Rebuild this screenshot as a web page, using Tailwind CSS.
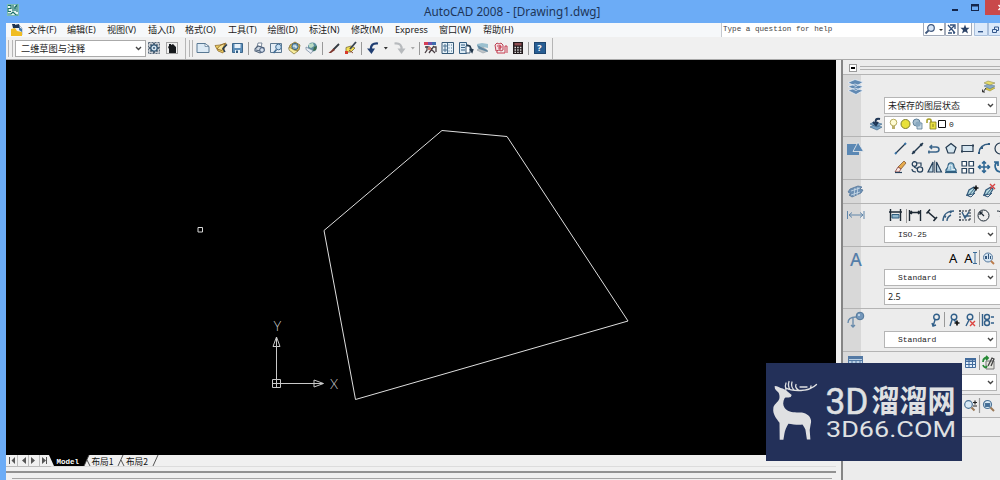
<!DOCTYPE html>
<html lang="zh-CN">
<head>
    <meta charset="UTF-8">
    <meta name="viewport" content="width=device-width, initial-scale=1.0">
    <title>AutoCAD 2008 - [Drawing1.dwg]</title>
    <script src="https://cdn.jsdelivr.net/npm/@tailwindcss/browser@4"></script>
</head>
<body class="bg-[#6cacf6] font-['Noto_Sans','Noto_Sans_CJK_SC',sans-serif] text-[#1c1c1c]">
    <div class="w-[1000px] h-[480px] overflow-hidden flex flex-col relative">
        <!-- Title bar -->
        <header class="h-[23px] shrink-0 flex items-start">
            <svg class="w-3 h-3 ml-[7px] mt-[4px]" viewBox="0 0 12 12">
                <path fill="#e4f4f0" d="M0 0h12v12H0z"/>
                <path fill="none" stroke="#176e68" stroke-width="1.2" d="M1 1.5h3v3H1v3h3M6 1v6M8 7V3l2-2v7M1 10h3l2-2 3 3h2M7 4h2"/>
                <path fill="none" stroke="#4fa59c" stroke-width=".8" d="M.4.4h11.2v11.2H.4z"/>
            </svg>
            <h1 class="ml-[405px] mt-[2px] text-[11.7px] leading-[18px] whitespace-nowrap text-[#1d3558]">AutoCAD 2008 - [Drawing1.dwg]</h1>
            <svg class="w-[49px] h-[15px] ml-auto" viewBox="0 0 49 15">
                <path fill="#14264c" d="M1 9h6v2H1zM20 4h8v7h-8zm1 2.500v3.500h6V6.500z" fill-rule="evenodd"/>
                <path fill="#c9494b" d="M34 0h15v15H34z"/>
                <path stroke="#fff" stroke-width="1.500" d="M47.500 5l5 5M47.500 10l5-5"/>
            </svg>
        </header>

        <div class="flex-1 min-h-0 ml-[6px] bg-[#f0f0f0] flex flex-col">
            <!-- Menu bar -->
            <nav class="h-[14px] shrink-0 flex items-center bg-[#f6f8fa] text-[9.1px] leading-[14px] whitespace-nowrap">
                <svg class="w-[12px] h-[12px] ml-[5px] mr-[5px]" viewBox="0 0 12 12">
                    <path fill="#eef2f8" stroke="#8792a5" stroke-width=".6" d="M3 1h5l3 3v7H3z"/>
                    <path fill="#1e3452" d="M1 0h3v4H2zM4 1l4-1 1 4H4z"/>
                    <path fill="#f0bd22" d="M0 5l4-1 2 3 5 1v4H0z"/>
                    <path fill="#4078aa" d="M8 3l3 2v3L8 6z"/>
                </svg>
                <span class="w-[39px]">文件(F)</span>
                <span class="w-[40px]">编辑(E)</span>
                <span class="w-[41px]">视图(V)</span>
                <span class="w-[37px]">插入(I)</span>
                <span class="w-[43px]">格式(O)</span>
                <span class="w-[39.500px]">工具(T)</span>
                <span class="w-[41.500px]">绘图(D)</span>
                <span class="w-[42px]">标注(N)</span>
                <span class="w-[44px]">修改(M)</span>
                <span class="w-[44px]">Express</span>
                <span class="w-[44px]">窗口(W)</span>
                <span class="w-[38px]">帮助(H)</span>
                <div class="ml-auto flex h-[14px] shrink-0 w-[279px] overflow-hidden">
                    <div class="w-[202px] shrink-0 bg-white border-l border-[#c4c8ce] pl-[1px] font-['Liberation_Mono',monospace] text-[7.600px] leading-[13px] text-[#444]">Type a question for help</div>
                    <svg class="w-[78px] h-[14px] shrink-0" viewBox="0 0 78 14">
                        <path fill="#fff" stroke="#a3abb9" d="M.5-1v13.500h21V-1M22.500-1v13.500h12V-1M35.500-1v13.500h13V-1"/>
                        <circle cx="8" cy="5" r="3.300" fill="#d8e6f7" stroke="#40587d" stroke-width="1.200"/>
                        <path stroke="#40587d" stroke-width="1.800" d="M5.500 7.500L2.500 10.500"/>
                        <path fill="#333" d="M16 6h4l-2 2z"/>
                        <path fill="none" stroke="#34507a" stroke-width="1.300" d="M25 2l7 8M26 8l5-5M27 2h5v4M25 10h4M30 10h2"/>
                        <path fill="#2b4266" d="M42 1.500l1.200 3.300h3.400L44 7l1 3.500-3-2-3 2L40 7l-2.600-2.200h3.400z"/>
                        <path fill="#dbe9fa" stroke="#a9bfdb" d="M51.500-1v13.500h13V-1M65.500-1v13.500h14V-1"/>
                        <path fill="#35588c" d="M55 8h5v1.400h-5z"/>
                        <path fill="none" stroke="#35588c" d="M69.500 6.500h4v3h-4zM71.500 6V4h4v3.500H74"/>
                    </svg>
                </div>
            </nav>

            <!-- Toolbars -->
            <div class="h-[23px] shrink-0 flex items-center border-b border-[#a9a9a9]">
                <div class="w-[5px] h-[17px] ml-[2px] border-x border-[#b5b5b5]"></div>
                <div class="w-[131px] h-[17px] ml-[2px] mr-px shrink-0 bg-white border border-[#aaaaaa] flex items-center justify-between pl-[5px] pr-[3px] text-[9.200px] leading-[15px]">
                    <span>二维草图与注释</span>
                    <svg class="w-[7px] h-[5px]" viewBox="0 0 7 5"><path fill="none" stroke="#444" stroke-width="1.400" d="M1 1l2.500 2.500L6 1"/></svg>
                </div>
                <svg class="w-[35px] h-[14px] shrink-0" viewBox="0 0 35 14">
                    <path fill="#c9ced4" stroke="#5b6b7d" stroke-dasharray="2 1" d="M1.500 1.500h11v11h-11z"/>
                    <path stroke="#2a4055" stroke-width="1.500" d="M7 2v10M2 7h10M3.500 3.500l7 7M10.500 3.500l-7 7"/>
                    <circle cx="7" cy="7" r="3.200" fill="#d5e3ee" stroke="#2f5574" stroke-width="1.300"/>
                    <circle cx="7" cy="7" r="1" fill="#2f5574"/>
                    <path fill="none" stroke="#555" stroke-dasharray="1 1" d="M19.500 1.500h11v11h-11z"/>
                    <path fill="#16191c" d="M21 6l1-1V3h2v1l2-1 3 3v6h-7V8z"/>
                </svg>
                <div class="w-[4px] h-[21px] mr-[3px] border-r border-[#b5b5b5]"></div>
                <div class="w-[4px] h-[17px] mr-[1px] border-x border-[#b5b5b5]"></div>
                <div class="flex items-center shrink-0 h-[21px] pr-[3px] border-r border-[#b5b5b5]">
                    <!-- new / open / save -->
                    <svg class="w-[17.500px] h-[14px]" viewBox="0 0 17.500 14"><path fill="#dceaf5" stroke="#597994" d="M3 2.500h8l4 3v6H3z"/><path fill="#fff" stroke="#597994" stroke-width=".7" d="M11 2.500v3h4z"/></svg>
                    <svg class="w-[17.500px] h-[14px]" viewBox="0 0 17.500 14"><path fill="#e9cb60" stroke="#937032" stroke-width=".8" d="M3 4.500l5-.5 6-2-3 10-5-2z"/><path fill="#f6e49a" stroke="#8a6325" stroke-width=".8" d="M5 8l3-3.500 5-2-3 7z"/><path fill="none" stroke="#263c53" stroke-width="1.500" d="M15 3.500l-4 4 2 3.500"/></svg>
                    <svg class="w-[17.500px] h-[14px]" viewBox="0 0 17.500 14"><path fill="#5b8db8" stroke="#3c678c" d="M3.500 2.500h10v9h-10z"/><path fill="#e7f1f9" d="M5.500 3h6v4h-6zM6 9h5v3H6z"/><path fill="#315b80" d="M7 9.500h2V12H7z"/></svg>
                    <span class="w-px h-[13px] ml-px mr-[2px] bg-[#999]"></span>
                    <!-- plot / preview / publish / 3D DWF -->
                    <svg class="w-[17.500px] h-[14px]" viewBox="0 0 17.500 14"><path fill="#fff" stroke="#5e7085" stroke-width=".8" d="M6 6l1-4h4l-1 4z"/><path fill="#cdd6e0" stroke="#506278" stroke-width="1.100" d="M4 8l3-3 6 2v3l-4 2-5-2z"/><circle cx="11" cy="9" r="2.300" fill="#d8e2ee" stroke="#43597a"/><path stroke="#506278" d="M5 9l4 1"/></svg>
                    <svg class="w-[17.500px] h-[14px]" viewBox="0 0 17.500 14"><path fill="#e4edf5" stroke="#5c7891" d="M2.500 2.500h11v9h-11z"/><circle cx="10.500" cy="6" r="2.800" fill="#c4def2" stroke="#426d94"/><path stroke="#426d94" stroke-width="1.600" d="M8.500 8.500l-3 3.500"/></svg>
                    <svg class="w-[17.500px] h-[14px]" viewBox="0 0 17.500 14"><path fill="#e4c34c" stroke="#7b6731" stroke-width=".8" d="M4 4l5-3 5 3-1 5-6 3-4-4z"/><circle cx="9" cy="5.500" r="3.200" fill="#7da6c0" stroke="#3c6684"/><path fill="#f8ed9c" stroke="#82743b" stroke-width=".7" d="M3 6l5 3 4 1-4 3-5-4z"/><path fill="none" stroke="#fff" d="M7 5h3v2"/></svg>
                    <svg class="w-[17.500px] h-[14px]" viewBox="0 0 17.500 14"><circle cx="9.500" cy="6" r="4.500" fill="#5b8e9d"/><path fill="#bcdcc4" d="M6 3l4-1 1 3-3 2-2-1z"/><path fill="#3c6c4c" d="M11 6l3-1-1 4-3 1z"/><path fill="#e8eef5" stroke="#70839a" stroke-width=".7" d="M3 6l5 2.500 2 1-2 3-5-4z"/></svg>
                    <span class="w-px h-[13px] ml-px mr-[2px] bg-[#999]"></span>
                    <!-- match properties / block editor -->
                    <svg class="w-[17.500px] h-[14px]" viewBox="0 0 17.500 14"><path stroke="#343a42" stroke-width="1.800" d="M14 3L8 9"/><path fill="#7d342b" d="M8.500 7.500l1.500 1.500L6 12H3.500z"/></svg>
                    <svg class="w-[17.500px] h-[14px]" viewBox="0 0 17.500 14"><path fill="#f4df52" stroke="#776c35" stroke-width=".8" d="M4 6.500l5-1.500 4 2-4 4H4z"/><path stroke="#394452" stroke-width="1.800" d="M14 1L8 8"/><path fill="#d83a2c" d="M3 10h3v3H3z"/><path stroke="#8c4735" d="M7 9l4 3"/></svg>
                    <span class="w-px h-[13px] ml-px mr-[2px] bg-[#999]"></span>
                    <!-- undo / redo -->
                    <svg class="w-[17.500px] h-[14px]" viewBox="0 0 17.500 14"><path fill="none" stroke="#203e72" stroke-width="2.200" d="M14 2.500C9 2 6.500 4 7 9"/><path fill="#203e72" d="M3 7.500h8L7.500 13z"/></svg>
                    <svg class="w-[9.500px] h-[14px]" viewBox="0 0 9.500 14"><path fill="#333" d="M2.800 6h4L4.800 8.500z"/></svg>
                    <svg class="w-[17.500px] h-[14px]" viewBox="0 0 17.500 14"><path fill="none" stroke="#b7babd" stroke-width="2.200" d="M3.500 2.500C9 2 11 4 10.500 9"/><path fill="#b7babd" d="M6.500 7.500h8L10.500 13z"/></svg>
                    <svg class="w-[9.500px] h-[14px]" viewBox="0 0 9.500 14"><path fill="#aaa" d="M2.800 6h4L4.800 8.500z"/></svg>
                    <span class="w-px h-[13px] ml-px mr-[2px] bg-[#999]"></span>
                    <!-- palettes -->
                    <svg class="w-[17.500px] h-[14px]" viewBox="0 0 17.500 14"><path fill="#d63d55" d="M2 1h4v3H2z"/><path fill="#6e51aa" d="M6 1h4v3H6z"/><path fill="#3d6cac" d="M10 1h4v3h-4z"/><path fill="none" stroke="#4b4045" stroke-width="1.300" d="M3 6h4l6 6M5 5v4l-2 3M12 5l-5 7M12 6h2v5"/><path fill="#cf7b6c" d="M6 6h3v3H6z"/></svg>
                    <svg class="w-[17.500px] h-[14px]" viewBox="0 0 17.500 14"><path fill="#e6f1f8" stroke="#365976" d="M3 1.500h11.500v11H3z"/><path fill="none" stroke="#4c7291" d="M5 4h2v2H5zM9.500 4h1M12 4h1M5 8h2v2H5zM9.500 7h1M12 7h1M9.500 10h1M12 10h1M8.500 2v10"/></svg>
                    <svg class="w-[17.500px] h-[14px]" viewBox="0 0 17.500 14"><path fill="#dceaf4" stroke="#365f82" d="M2.500 1.500h7v11h-7z"/><path stroke="#365f82" d="M4 4h4M4 6.500h4M4 9h4"/><path fill="#fff" stroke="#3a5975" d="M9 5h4v7H9z"/><path fill="none" stroke="#24384b" stroke-width="1.500" d="M10 4l3 1 2 5M13 8l2 3 1-3"/></svg>
                    <svg class="w-[17.500px] h-[14px]" viewBox="0 0 17.500 14"><path fill="#9bc0cf" d="M3 3l5-1 6 1v4L9 6 4 8z"/><path fill="#c1c5c8" stroke="#9aa5ac" stroke-width=".7" d="M3 9l6-3 5 4-5 2z"/><path fill="#5f86a0" d="M3 4l10 5 1 2-9-3z"/></svg>
                    <svg class="w-[17.500px] h-[14px]" viewBox="0 0 17.500 14"><path fill="#f3dfe2" stroke="#bd3f51" d="M3 4l2-2 2 1 2-1 2 2v5l-2 1-2-1-3 1z"/><path fill="none" stroke="#c83b4e" d="M5 5h4v2H6M5 10v2h8V5h2v7M8 4v5"/></svg>
                    <svg class="w-[17.500px] h-[14px]" viewBox="0 0 17.500 14"><path fill="#241b1d" d="M4 1h10v12H4z"/><path fill="#8e4c50" d="M5.500 2h7v2.500h-7z"/><path stroke="#ddd" stroke-width="1.300" stroke-dasharray="1.500 1.200" d="M5.500 6.500h8M5.500 9h8M5.500 11.300h8"/></svg>
                    <span class="w-px h-[13px] ml-px mr-[2px] bg-[#999]"></span>
                    <span class="w-[12px] h-[12px] mx-[3px] bg-[#285e93] border border-[#1e4670] text-white text-[9px] leading-[10px] font-bold text-center">?</span>
                </div>
            </div>

            <div class="flex-1 min-h-0 flex">
                <div class="w-[830px] shrink-0 flex flex-col">
                    <!-- Drawing area -->
                    <svg class="w-[830px] h-[395px] bg-black shrink-0" viewBox="6 60 830 395">
                        <path fill="none" stroke="#dedede" stroke-width="1" d="M324 230.500L442 130.500L507 136.500L628 321L355.500 399.500Z"/>
                        <path fill="none" stroke="#d8d8d8" d="M198 227.500h4.500v4.500h-4.500z"/>
                        <path fill="none" stroke="#c9c9c9" d="M272.500 379.500h8v8h-8zM276.500 387v-40M272.500 383.500H314M276.500 337l3.500 9.500h-7zM276.500 337v10M323.500 383.500l-9.500-3.500v7zM314 383.500h9"/>
                        <text x="273.500" y="330.500" fill="#cfcfcf" font-size="13" font-family="Lato" font-weight="300">Y</text>
                        <text x="330" y="388.500" fill="#cfcfcf" font-size="13" font-family="Lato" font-weight="300">X</text>
                    </svg>
                    <!-- Layout tabs -->
                    <div class="h-[12px] shrink-0 flex border-b border-[#dcdcdc]">
                        <svg class="w-[155px] h-[12px]" viewBox="0 0 155 12">
                            <path stroke="#bcbcbc" d="M11.500 0v12M22.500 0v12M33.500 0v12M0 11.500h45"/>
                            <path fill="#555" d="M9 2v7L5.500 5.500zM3 2h1v7H3zM20 2v7l-4-3.500zM25 2v7l4-3.500zM36 2v7l4-3.500zM40 2h1v7h-1z"/>
                            <path fill="#000" d="M43 0h40l-5 11H48z"/>
                            <path fill="none" stroke="#444" stroke-width=".9" d="M83 0l-5 11M84 11l-3-6M117 0l-5 11M118 11l-3-6M152 0l-5 11"/>
                            <text x="50.500" y="9" fill="#fff" font-size="7.500" font-weight="700" font-family="Liberation Mono">Model</text>
                            <text x="85.500" y="9.500" fill="#111" font-size="9" font-family="Noto Sans CJK SC" textLength="22" lengthAdjust="spacingAndGlyphs">布局1</text>
                            <text x="120" y="9.500" fill="#111" font-size="9" font-family="Noto Sans CJK SC" textLength="22" lengthAdjust="spacingAndGlyphs">布局2</text>
                        </svg>
                    </div>
                    <div class="mt-[4px] h-[8px] border-t-2 border-[#929292]"></div>
                    <div class="-mt-px ml-[6px] mr-[4px] h-px bg-[#a5a5a5]"></div>
                </div>

                <!-- Dashboard -->
                <aside class="w-[164px] shrink-0 pl-[5px]">
                    <div class="h-[420px] border-l-2 border-[#858585] bg-[#ececec] flex flex-col">
                        <div class="h-[14px] shrink-0 flex items-center">
                            <span class="w-[8px] h-[8px] ml-[6px] mr-[3px] mt-[2px] bg-white border border-[#999] flex items-center justify-center"><i class="block w-[4px] h-[2px] bg-black"></i></span>
                            <span class="flex-1 h-[4px] mt-[2px] border-y border-[#b1b1b1]"></span>
                        </div>

                        <!-- layers -->
                        <section class="h-[62px] shrink-0 flex border-t border-[#b4b4b4]">
                            <div class="w-[18px] shrink-0 bg-[#d8d8d8]">
                                <svg class="w-[18px] h-[18px] ml-[4px] mt-[3px] max-w-none" viewBox="0 0 18 18"><path fill="#6189b2" stroke="#eef4fa" stroke-width=".7" d="M1 12.500l7-2.500 8 2.500-7 4zM1 8.500l7-2.500 8 2.500-7 4zM1 4.500L8 1.500l8 2.500-7 4.500z"/></svg>
                            </div>
                            <div class="flex-1 pl-[23px] overflow-hidden">
                                <div class="h-[22px] flex justify-end pr-[4px] pt-[4px]">
                                    <svg class="w-[15px] h-[15px]" viewBox="0 0 15 15"><path fill="#d9c63e" stroke="#8a8436" stroke-width=".5" d="M4 10l4-3 6 2-5 3z"/><path fill="#88a9c4" stroke="#4f718f" stroke-width=".5" d="M3 7l4-2 7 2-5 3z"/><path fill="#e7dd6b" stroke="#7e7c40" stroke-width=".5" d="M3 4l4-2 7 2-5 2z"/><path fill="none" stroke="#333" d="M5 9l-3 4M1.500 10.500v2.500H4"/></svg>
                                </div>
                                <div class="w-[113px] h-[17px] bg-white border border-[#b5b5b5] flex items-center justify-between pl-[3px] pr-[2px] text-[9px] leading-[15px]">
                                    <span>未保存的图层状态</span>
                                    <svg class="w-[7px] h-[5px]" viewBox="0 0 7 5"><path fill="none" stroke="#444" stroke-width="1.400" d="M1 1l2.500 2.500L6 1"/></svg>
                                </div>
                                <div class="-ml-[16px] mt-[2px] flex">
                                    <svg class="w-[16px] h-[16px] shrink-0" viewBox="0 0 16 16"><path fill="#7aa3c4" stroke="#3b6488" stroke-width=".6" d="M2 11l4-2 8 2-5 3zM2 8l4-2 8 2-5 3z"/><path fill="none" stroke="#1e3554" stroke-width="2" d="M12 3C8 2 7 4 8 7M5 6l3 3 2-3"/></svg>
                                    <div class="w-[140px] h-[17px] shrink-0 bg-white border border-[#b5b5b5] flex items-center">
                                        <svg class="w-[62px] h-[15px] shrink-0" viewBox="0 0 62 15">
                                            <circle cx="8.500" cy="5.500" r="3.300" fill="#fffcd2" stroke="#a4983f" stroke-width=".8"/><path fill="#bbb06a" d="M7 9h3v3H7z"/>
                                            <circle cx="20.500" cy="7" r="4.500" fill="#e8e13b" stroke="#7f7f32"/>
                                            <circle cx="31.500" cy="5.500" r="3.500" fill="#a5bed0" stroke="#5d7f98"/><path fill="#c7d9e5" stroke="#5d7f98" stroke-width=".8" d="M32 6h5v6h-5z"/><circle cx="33" cy="7" r="2.600" fill="#88a8bf"/>
                                            <path fill="none" stroke="#a49c22" stroke-width="1.500" d="M42 6V3.500c0-2 4-2 4 0V8"/><path fill="#e7df43" stroke="#847e22" stroke-width=".8" d="M45 5h6v7h-6z"/><path stroke="#847e22" d="M48 7v3"/>
                                            <path fill="#fff" stroke="#111" d="M53.500 3.500h7v7h-7z"/>
                                        </svg>
                                        <span class="ml-[2px] font-['Liberation_Mono',monospace] text-[8px]">0</span>
                                    </div>
                                </div>
                            </div>
                        </section>

                        <!-- 2D draw -->
                        <section class="h-[43px] shrink-0 flex border-t border-[#b4b4b4]">
                            <div class="w-[18px] shrink-0 bg-[#d8d8d8]">
                                <svg class="w-[18px] h-[16px] ml-[3px] mt-[4px] max-w-none" viewBox="0 0 18 16"><path fill="#5b88b4" d="M1 3h12v11H1z"/><path fill="#5b88b4" stroke="#eee" stroke-width=".8" d="M12 1l5.500 9.500H7z"/></svg>
                            </div>
                            <div class="flex-1 pl-[31px] pt-[2px] overflow-hidden">
                                <svg class="w-[116px] h-[19px] max-w-none" viewBox="0 0 116 19" fill="none" stroke="#22384e" stroke-width="1.200">
                                    <path d="M4 14l9-9"/><path stroke="#3b76aa" stroke-width="2" d="M3 15l1.500-1.500M12.500 5.500L14 4"/>
                                    <path d="M20 15L31 4" stroke-width="1.500"/><path stroke-width="2.500" d="M21 14l1.500-1.500M28.500 6.500L30 5"/>
                                    <path stroke="#3c668b" stroke-width="1.500" d="M36 13h8c4 0 4-5 0-5h-6M37 11.500v3M40 6l-2 2 2 2"/>
                                    <path fill="#d5e5ee" d="M59 4.500l5 4-2 5.500h-6l-2-5.500z"/>
                                    <path fill="#d6e5ef" stroke="#2c4054" d="M70 6.500h11v6H70z"/><path stroke="#2c4054" stroke-width="2" d="M69 12.500h2M80 6.500h2"/>
                                    <path stroke="#315b80" stroke-width="1.500" d="M87 14c0-5 4-9 10-9"/><path stroke="#315b80" stroke-width="2" d="M86 14h2M89 9h2M96 5h2"/>
                                    <circle cx="108.500" cy="9.500" r="5.500"/><path d="M108 9.500h3"/>
                                </svg>
                                <svg class="w-[116px] h-[19px] max-w-none" viewBox="0 0 116 19" fill="none" stroke="#26415b" stroke-width="1.200">
                                    <path fill="#e5aa4c" stroke="#865c35" stroke-width=".8" d="M6 9l6-6 2 2-5 6z"/><path fill="#f7e7e2" stroke="#883f3b" stroke-width=".8" d="M6 9l3 2-2 3H3z"/><path d="M3 14.500h7"/>
                                    <circle cx="22.500" cy="6" r="2.300"/><circle cx="28" cy="11.500" r="2.700"/><path d="M20 11c0 2 2 3 4 3M25 5h4v3M22 9l4 2"/>
                                    <path fill="#c4dae7" d="M41 4v10h-5zM44.500 4v10h5z"/><path d="M42.700 2.500v12.500" stroke-width=".8"/>
                                    <path fill="#8dbad1" stroke="#315f80" d="M54 13.500h10c1-3-2-3-2-5 0-5-6-5-6 0 0 2-3 2-2 5z"/><path stroke="#315f80" d="M53 14.500h12"/><path stroke="#e4f0f6" d="M57 11.500v-3c0-2 3-2 3 0v3h3"/>
                                    <path fill="#fff" d="M70 3.500h4.500V8H70zM77 3.500h4.500V8H77zM70 10.500h4.500v4.500H70zM77 10.500h4.500v4.500H77z"/>
                                    <path stroke="#2d6693" stroke-width="1.500" d="M92 3.500v11M86.500 9h11M90 5.500l2-2 2 2M90 12.500l2 2 2-2M88.500 7l-2 2 2 2M95.500 7l2 2-2 2"/>
                                    <path stroke="#2d6693" stroke-width="1.700" d="M106 4c-5 2-3 10 3 10M102 4h4v4"/>
                                </svg>
                            </div>
                        </section>

                        <!-- scaling list -->
                        <section class="h-[24px] shrink-0 flex border-t border-[#b4b4b4]">
                            <div class="w-[18px] shrink-0 bg-[#d8d8d8]">
                                <svg class="w-[18px] h-[16px] ml-[4px] mt-[4px] max-w-none" viewBox="0 0 18 16"><path fill="#6d90b4" stroke="#58789a" stroke-width=".8" d="M3 5l8-3 4 1-2 2 3 1-2 3-9 4-3-2 2-1-3-2z"/><path stroke="#d8e6f0" stroke-width=".7" d="M4 7l9-3M4 11l9-3M8 4l-1 8M11 3l-1 8"/></svg>
                            </div>
                            <svg class="w-[137px] h-[22px]" viewBox="0 0 137 22" fill="none" stroke="#33597a">
                                <path fill="#b6dce2" stroke-width="1.200" d="M106 15l2-5 5-3 2 2-3 5z"/><path d="M107 16l7-8M105 15l5 2 4-4"/><path stroke="#111" stroke-width="1.600" d="M115 5.500v5M112.500 8h5"/>
                                <path fill="#b6dce2" stroke-width="1.200" d="M123 15l2-5 5-3 2 2-3 5z"/><path d="M124 16l7-8M122 15l5 2 4-4"/><path stroke="#d84343" stroke-width="1.300" d="M129 4l5 5M134 4l-5 5"/>
                            </svg>
                        </section>

                        <!-- dimensions -->
                        <section class="h-[43px] shrink-0 flex border-t border-[#b4b4b4]">
                            <div class="w-[18px] shrink-0 bg-[#d8d8d8]">
                                <svg class="w-[18px] h-[12px] ml-[4px] mt-[5px] max-w-none" viewBox="0 0 18 12"><path fill="none" stroke="#6186aa" d="M.5 2v8M17 2v8M2 6h14M5 3.500L2 6l3 2.500M13 3.500L16 6l-3 2.500"/></svg>
                            </div>
                            <div class="flex-1 pl-[23px] overflow-hidden">
                                <svg class="w-[120px] h-[22px] max-w-none" viewBox="0 0 120 22" fill="none" stroke="#1d2934" stroke-width="1.400">
                                    <path fill="#8fb5cb" stroke="#315f80" d="M8 10.500h7v3.500H8z" stroke-width="1"/><path d="M6.500 5v12M16.500 5v12M5 8h13"/>
                                    <path stroke="#999" stroke-width="1" d="M22.500 5v14"/>
                                    <path d="M25.500 6v11M36.500 6v11M26 8.500h10M28 7l-2 1.500L28 10M34 7l2 1.500-2 1.500"/>
                                    <path d="M44 8l8 7M42.500 9.500l3.500-4M49.500 17l3.500-4" stroke-width="1.600"/>
                                    <path stroke="#365e82" d="M59 17c0-6 4-10 11-10M63 17c0-3 2-5 4-6"/><path stroke="#365e82" stroke-width="2" d="M60 12l2 1M66 7l1 2"/>
                                    <path stroke-dasharray="2 1" stroke-width="1" d="M75 7h12M75 16h12M76 6v11M86 5v11"/><path stroke="#365e82" d="M78 8l3 6 4-6M80 12h5"/>
                                    <path stroke="#999" stroke-width="1" d="M90.500 5v14"/>
                                    <circle cx="99.500" cy="11.500" r="5.500" stroke-width="1"/><path d="M96 8l4 4M96 11V8h3" stroke-width="1.200"/>
                                    <path d="M113 7c5 0 6 3 3 6" stroke-width="1"/>
                                </svg>
                                <div class="w-[113px] h-[17px] bg-white border border-[#b5b5b5] flex items-center justify-between pl-[13px] pr-[2px] text-[8px] leading-[14px] font-['Liberation_Mono',monospace]">
                                    <span>ISO-25</span>
                                    <svg class="w-[7px] h-[5px]" viewBox="0 0 7 5"><path fill="none" stroke="#444" stroke-width="1.400" d="M1 1l2.500 2.500L6 1"/></svg>
                                </div>
                            </div>
                        </section>

                        <!-- text -->
                        <section class="h-[62px] shrink-0 flex border-t border-[#b4b4b4]">
                            <div class="w-[18px] shrink-0 bg-[#d8d8d8] pl-[7px] pt-[2px] text-[18px] leading-[20px] font-medium text-[#557ea9] font-['Noto_Sans',sans-serif]">A</div>
                            <div class="flex-1 pl-[23px] overflow-hidden">
                                <div class="h-[22px] flex items-center pl-[65px] text-[13px] leading-[20px] font-['Noto_Sans',sans-serif] text-black">
                                    <span class="w-[15.500px]">A</span><span class="w-[9px]">A</span>
                                    <svg class="w-[27px] h-[18px] shrink-0" viewBox="0 0 27 18"><path fill="none" stroke="#3b6c98" d="M0 3.500h4M2 3.500v11M0 14.500h4"/><path stroke="#999" d="M6.500 1v15"/><circle cx="15" cy="8.500" r="4.500" fill="#d5e5f2" stroke="#577a9e"/><path fill="#34577d" d="M12 10V7h2v3zM15 10V5h1v5zM17 10V7h1v3z"/><path stroke="#bc7c4b" stroke-width="1.800" d="M18 12l3 3"/></svg>
                                </div>
                                <div class="w-[113px] h-[17px] bg-white border border-[#b5b5b5] flex items-center justify-between pl-[13px] pr-[2px] text-[8px] leading-[15px] font-['Liberation_Mono',monospace]">
                                    <span>Standard</span>
                                    <svg class="w-[7px] h-[5px]" viewBox="0 0 7 5"><path fill="none" stroke="#444" stroke-width="1.400" d="M1 1l2.500 2.500L6 1"/></svg>
                                </div>
                                <div class="w-[140px] h-[17px] mt-[2px] bg-white border border-[#b5b5b5] pl-[3px] text-[9px] leading-[15px]">2.5</div>
                            </div>
                        </section>

                        <!-- multileaders -->
                        <section class="h-[43px] shrink-0 flex border-t border-[#b4b4b4]">
                            <div class="w-[18px] shrink-0 bg-[#d8d8d8]">
                                <svg class="w-[18px] h-[18px] ml-[4px] mt-[2px] max-w-none" viewBox="0 0 18 18"><circle cx="13" cy="5" r="3.800" fill="#7497bb" stroke="#527799"/><circle cx="12" cy="4" r="1" fill="#d5e4f2"/><path fill="none" stroke="#6689aa" stroke-width="1.300" d="M9 6C4 6 1 8 1 12M6 7v9M4 14l2 2 2-2"/></svg>
                            </div>
                            <div class="flex-1 pl-[23px] overflow-hidden">
                                <svg class="w-[115px] h-[22px] max-w-none" viewBox="0 0 115 22" fill="none" stroke="#315f89" stroke-width="1.400">
                                    <circle cx="52.500" cy="8" r="2.800"/><path d="M51 11l-2 6M48 14l1 3 3-1"/>
                                    <path stroke="#999" stroke-width="1" d="M60.500 3v15M95.500 3v15"/>
                                    <circle cx="70" cy="8" r="2.800"/><path d="M68 11l-2 6M70 11l3 3"/><path stroke="#111" stroke-width="1.700" d="M73 11.500v5M70.500 14h5"/>
                                    <circle cx="86" cy="8" r="2.800"/><path d="M85 11l-3 6"/><path stroke="#dc4541" d="M86 12l5 5M91 12l-5 5"/>
                                    <path d="M98.500 5v12"/><circle cx="103" cy="8" r="2.500"/><circle cx="103" cy="14" r="2.500"/><path d="M107 8h3M107 14h3"/>
                                </svg>
                                <div class="w-[113px] h-[17px] bg-white border border-[#b5b5b5] flex items-center justify-between pl-[13px] pr-[2px] text-[8px] leading-[14px] font-['Liberation_Mono',monospace]">
                                    <span>Standard</span>
                                    <svg class="w-[7px] h-[5px]" viewBox="0 0 7 5"><path fill="none" stroke="#444" stroke-width="1.400" d="M1 1l2.500 2.500L6 1"/></svg>
                                </div>
                            </div>
                        </section>

                        <!-- tables -->
                        <section class="h-[43px] shrink-0 flex border-t border-[#b4b4b4]">
                            <div class="w-[18px] shrink-0 bg-[#d8d8d8]">
                                <svg class="w-[16px] h-[14px] ml-[5px] mt-[4px] max-w-none" viewBox="0 0 16 14"><path fill="#b9cfe4" stroke="#5379a4" d="M.5.500h14v12H.5zM.5 4.500h14M.5 8.500h14M4 4v9M8 4v9M12 4v9"/><path fill="#5379a4" d="M0 0h15v3H0z"/></svg>
                            </div>
                            <div class="flex-1 pl-[23px] overflow-hidden">
                                <svg class="w-[115px] h-[22px] max-w-none" viewBox="0 0 115 22" fill="none">
                                    <path fill="#e2effb" stroke="#426b9c" d="M81.500 6.500h10v9h-10zM81.500 9.500h10M81.500 12.500h10M85 7v8M88.500 7v8"/><path fill="#426b9c" d="M81 6h11v2.500H81z"/>
                                    <path stroke="#999" d="M95.500 3v15"/>
                                    <path fill="#e5e5df" stroke="#777" d="M102 9h8v8h-8z"/><path stroke="#278a36" stroke-width="1.800" d="M99 10c0-4 3-5 5-4M102 4l2 2-2 2M99 13c1 3 3 3 4 1"/><path stroke="#444" stroke-width="1.300" d="M104 14l4-8 2 1-3 7"/>
                                </svg>
                                <div class="w-[113px] h-[17px] bg-white border border-[#b5b5b5] flex items-center justify-end pr-[2px]">
                                    <svg class="w-[7px] h-[5px]" viewBox="0 0 7 5"><path fill="none" stroke="#444" stroke-width="1.400" d="M1 1l2.500 2.500L6 1"/></svg>
                                </div>
                            </div>
                        </section>

                        <!-- navigation -->
                        <section class="h-[23px] shrink-0 flex border-t border-[#b4b4b4]">
                            <div class="w-[18px] shrink-0 bg-[#d8d8d8]"></div>
                            <svg class="w-[137px] h-[22px]" viewBox="0 0 137 22" fill="none" stroke="#4c7397" stroke-width="1.200">
                                <circle cx="107.500" cy="9.500" r="3.800" fill="#d8e9f5"/><path stroke="#9b7957" stroke-width="2" d="M110.500 12.500l3 3"/><path stroke="#222" d="M112 7.500h4M114 5.500v4M112 11h4"/>
                                <path stroke="#999" d="M118.500 3v15"/>
                                <circle cx="126.500" cy="9.500" r="4" fill="#d8e9f5"/><path fill="#3f6d9a" d="M124.500 8.500h4v3h-4z"/><path stroke="#9b7957" stroke-width="2" d="M129.500 12.500l3.500 3.500"/>
                            </svg>
                        </section>
                        <div class="h-[20px] shrink-0 border-y border-[#b4b4b4] bg-[#efefef]"></div>
                    </div>
                </aside>
            </div>
        </div>

        <!-- Watermark -->
        <div class="absolute left-[766px] top-[363px] w-[195.500px] h-[98px] bg-[#233059]">
            <svg class="w-[195px] h-[98px]" viewBox="0 0 195 98">
                <path fill="#dfe0e2" d="M8.700 23c3 0 5 2 8 2.500l3 1.500 6 5-1 2c-3 1-5 0-6 1-2 4-2 7 0 10 3 4 7 4 12 4.500 4 0 8-.5 11 2.500 3 2 4 6 3 9l-1 6 .7 9.500h-3.500l-1.500-10c-1-2-2-4-3-5-4 1-10-.5-14-.8-2 3-3.500 7-4 10l-1 6h-3.700l-.2-17c-3-4-7-9-6.200-14 0-5 5-6 6-10 .5-2 .2-4-.7-6-2-2-4-3-3.900-5.700z"/>
                <path fill="none" stroke="#dfe0e2" stroke-width="1.300" stroke-linecap="round" d="M20 27c-1-3-1-5 0-7M20 25c5 3 10 2.500 15 2.500 7-.5 12-2.500 15.500-6M24 26.500c-2-3-2-5-1-8M28 27c-3-3-3-5-2-8M33 27.500c-3-2-4-4-3-6M39 27c4 0 6-2 6-4M34 24h7"/>
                <text x="59.500" y="51" fill="#dfe0e2" font-size="37" font-family="Roboto" stroke="#dfe0e2" stroke-width=".5" textLength="43" lengthAdjust="spacingAndGlyphs">3D</text>
                <text x="105.500" y="49" fill="#dfe0e2" font-size="30.500" font-weight="700" font-family="Noto Sans CJK SC" textLength="84" lengthAdjust="spacingAndGlyphs">溜溜网</text>
                <text x="60" y="73.500" fill="#dfe0e2" font-size="22.500" font-family="Roboto" textLength="130" lengthAdjust="spacingAndGlyphs">3D66.COM</text>
            </svg>
        </div>
    </div>
</body>
</html>
